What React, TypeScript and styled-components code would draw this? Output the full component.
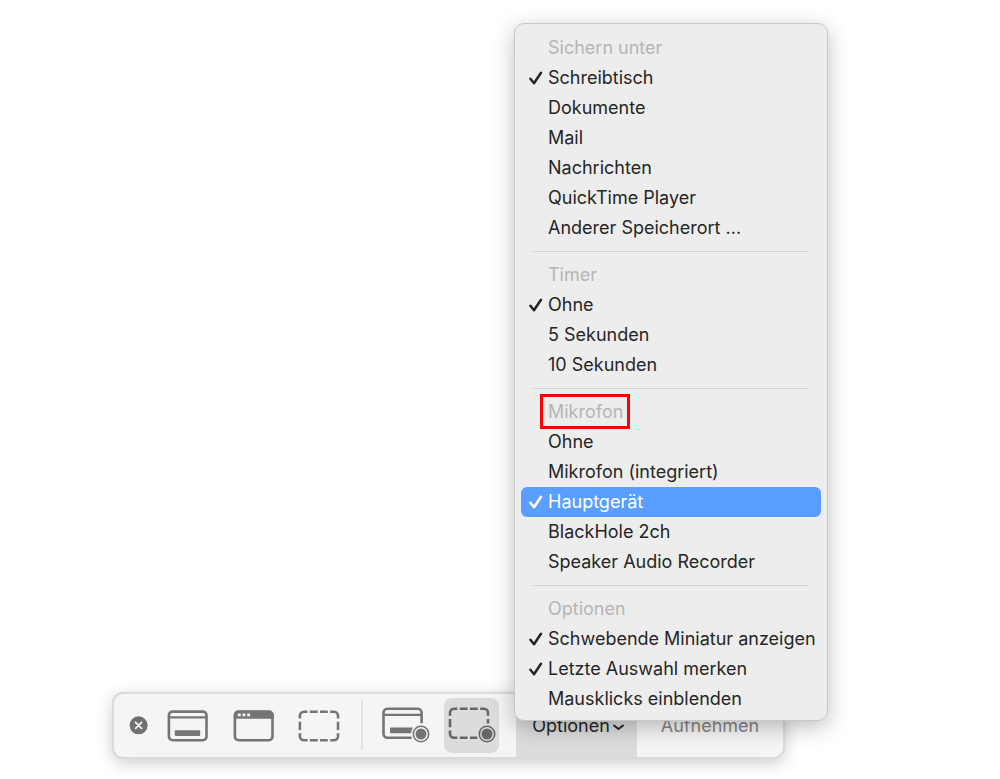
import React from "react";
import styled, { createGlobalStyle } from "styled-components";

const GlobalStyle = createGlobalStyle`
  *, *::before, *::after { box-sizing: border-box; }
  body {
    margin: 0;
    background: #fff;
    color: #262626;
    font-family: Inter, "Liberation Sans", sans-serif;
    font-size: 18px;
  }
  button { font: inherit; color: inherit; border: 0; padding: 0; background: none; }
`;

const Desktop = styled.main`
  min-height: 100vh;
  display: flex;
  align-items: flex-end;
  padding: 20px 215px 20px 112px;
`;

const Toolbar = styled.div`
  flex: 1;
  display: flex;
  align-items: stretch;
  height: 67px;
  border: 2px solid #dadada;
  border-radius: 11px;
  background: #f5f5f5;
  box-shadow: 0 4px 16px rgba(0, 0, 0, 0.2);
`;

const Tools = styled.div`
  flex: none;
  width: 402px;
  display: flex;
  align-items: center;
  padding: 0 0 1px 15px;
`;

const CloseButton = styled.button`
  width: 20px;
  height: 20px;
  margin-right: 11px;
  svg { display: block; }
`;

const ToolButton = styled.button<{ $active?: boolean }>`
  width: 55px;
  height: 55px;
  margin-right: 11px;
  border-radius: 8px;
  background: ${(p) => (p.$active ? "#dcdcdc" : "transparent")};
  color: ${(p) => (p.$active ? "#666" : "#757575")};
  svg { display: block; }
`;

const ToolDivider = styled.span`
  width: 2px;
  height: 50px;
  margin: 0 15px 0 3px;
  background: #e2e2e2;
`;

const OptionsAnchor = styled.div`
  position: relative;
  flex: none;
  width: 121px;
`;

const OptionsButton = styled.button`
  width: 100%;
  height: 100%;
  display: flex;
  align-items: center;
  justify-content: center;
  gap: 2px;
  padding-left: 4px;
  background: #dcdcdc;
`;

const RecordButton = styled.button`
  flex: 1;
  border-radius: 0 9px 9px 0;
  color: #858585;
`;

const Menu = styled.div`
  position: absolute;
  left: -2px;
  bottom: 36px;
  width: 314px;
  padding: 8px 6px 6px;
  border: 1px solid #c8c8c8;
  border-radius: 10px;
  background: #ededed;
  box-shadow: 0 6px 22px rgba(0, 0, 0, 0.26);
`;

const Section = styled.div`
  & + & {
    margin-top: 8px;
  }
  & + &::before {
    content: "";
    display: block;
    height: 1px;
    margin: 0 13px 7px 12px;
    background: #d2d2d2;
  }
`;

const SectionTitle = styled.div`
  padding-left: 27px;
  line-height: 31px;
  color: #b5b5b5;
`;

const TitleText = styled.span<{ $marked?: boolean }>`
  position: relative;
  display: inline-block;
  ${(p) =>
    p.$marked &&
    `&::after {
      content: "";
      position: absolute;
      inset: -2px -7px -2px -8px;
      border: 3px solid #f00;
    }`}
`;

const Item = styled.button<{ $highlighted?: boolean }>`
  width: 100%;
  display: flex;
  align-items: center;
  padding-left: 8px;
  border-radius: 6px;
  line-height: 30px;
  text-align: left;
  white-space: nowrap;
  background: ${(p) => (p.$highlighted ? "#5a9fff" : "transparent")};
  color: ${(p) => (p.$highlighted ? "#fff" : "inherit")};
`;

const CheckSlot = styled.span`
  flex: none;
  width: 19px;
  height: 14px;
  svg { display: block; }
`;

const Check = () => (
  <svg width="14" height="14" viewBox="0 0 14 14" fill="none" stroke="currentColor" strokeWidth="2.5" strokeLinecap="round" strokeLinejoin="round" aria-hidden="true">
    <path d="M1.4 7.8 L5 12.2 L12 1.7" />
  </svg>
);

const RecordBadge = () => (
  <>
    <circle cx="43" cy="36" r="7.7" fill="none" stroke="currentColor" strokeWidth="1.6" />
    <circle cx="43" cy="36" r="5.5" fill="currentColor" />
  </>
);

const frame = { fill: "none", stroke: "currentColor", strokeWidth: 2.6 };

const ScreenIcon = () => (
  <svg width="55" height="55" viewBox="0 0 55 55" aria-hidden="true">
    <rect x="8.9" y="13.6" width="37.6" height="28.6" rx="3.6" {...frame} />
    <path d="M9 19.4H47" {...frame} strokeWidth="2.2" />
    <rect x="14.8" y="32.2" width="25.4" height="5.8" rx="1" fill="currentColor" />
  </svg>
);

const WindowIcon = () => (
  <svg width="55" height="55" viewBox="0 0 55 55" aria-hidden="true">
    <rect x="8.9" y="13.6" width="37.6" height="28.6" rx="3.6" {...frame} />
    <path d="M7.8 20.8V17a4.3 4.3 0 0 1 4.3-4.3H43.4a4.3 4.3 0 0 1 4.3 4.3v3.8Z" fill="currentColor" />
    <path d="M11.8 15.4h2.9v2.9h-2.9zM16.5 15.4h2.9v2.9h-2.9zM21.2 15.4h2.9v2.9h-2.9z" fill="#f5f5f5" />
  </svg>
);

const SelectionIcon = () => (
  <svg width="55" height="55" viewBox="0 0 55 55" aria-hidden="true">
    <path
      d="M7.9 20.5V17.7a4 4 0 0 1 4-4H15.5M17.8 13.7H25.7M28 13.7H35.8M38.2 13.7H42a4 4 0 0 1 4 4V20.5M7.9 23.7V32M46 23.7V32M7.9 35.2V38.2a4 4 0 0 0 4 4H15.5M17.8 42.2H25.7M28 42.2H35.8M38.2 42.2H42a4 4 0 0 0 4-4V35.2"
      {...frame}
    />
  </svg>
);

const RecordScreenIcon = () => (
  <svg width="55" height="55" viewBox="0 0 55 55" aria-hidden="true">
    <path d="M43.6 25.2V14.7a4 4 0 0 0-4-4H9.5a4 4 0 0 0-4 4V35.8a4 4 0 0 0 4 4H33.6" {...frame} />
    <path d="M5 16.8H43.6" {...frame} strokeWidth="2.2" />
    <path d="M13 29.5H35Q33.3 32 33 35.2H13a1 1 0 0 1-1-1V30.5a1 1 0 0 1 1-1Z" fill="currentColor" />
    <RecordBadge />
  </svg>
);

const RecordSelectionIcon = () => (
  <svg width="55" height="55" viewBox="0 0 55 55" aria-hidden="true">
    <path
      d="M6 17.8V14.7a4 4 0 0 1 4-4H13.4M15.8 10.7H23.6M26 10.7H33.8M36.2 10.7H40a4 4 0 0 1 4 4V17.8M6 21V29.3M44 21V25.4M6 32.5V35.8a4 4 0 0 0 4 4H13.4M15.8 39.8H23.6M26 39.8H33.4"
      {...frame}
    />
    <RecordBadge />
  </svg>
);

type Entry = { label: string; checked?: boolean; highlighted?: boolean };
type Group = { title: string; marked?: boolean; multiple?: boolean; entries: Entry[] };

const groups: Group[] = [
  {
    title: "Sichern unter",
    entries: [
      { label: "Schreibtisch", checked: true },
      { label: "Dokumente" },
      { label: "Mail" },
      { label: "Nachrichten" },
      { label: "QuickTime Player" },
      { label: "Anderer Speicherort ..." },
    ],
  },
  {
    title: "Timer",
    entries: [{ label: "Ohne", checked: true }, { label: "5 Sekunden" }, { label: "10 Sekunden" }],
  },
  {
    title: "Mikrofon",
    marked: true,
    entries: [
      { label: "Ohne" },
      { label: "Mikrofon (integriert)" },
      { label: "Hauptgerät", checked: true, highlighted: true },
      { label: "BlackHole 2ch" },
      { label: "Speaker Audio Recorder" },
    ],
  },
  {
    title: "Optionen",
    multiple: true,
    entries: [
      { label: "Schwebende Miniatur anzeigen", checked: true },
      { label: "Letzte Auswahl merken", checked: true },
      { label: "Mausklicks einblenden" },
    ],
  },
];

export default function App() {
  return (
    <>
      <GlobalStyle />
      <Desktop>
        <Toolbar role="toolbar">
          <Tools>
            <CloseButton aria-label="Schließen">
              <svg width="20" height="20" viewBox="0 0 20 20" aria-hidden="true">
                <circle cx="9.6" cy="10.3" r="9" fill="#707070" />
                <path d="M6.6 7.3l6 6M12.6 7.3l-6 6" stroke="#f5f5f5" strokeWidth="1.8" strokeLinecap="round" />
              </svg>
            </CloseButton>
            <ToolButton aria-label="Gesamten Bildschirm aufnehmen"><ScreenIcon /></ToolButton>
            <ToolButton aria-label="Fenster aufnehmen"><WindowIcon /></ToolButton>
            <ToolButton aria-label="Auswahl aufnehmen"><SelectionIcon /></ToolButton>
            <ToolDivider />
            <ToolButton aria-label="Bildschirmvideo aufnehmen"><RecordScreenIcon /></ToolButton>
            <ToolButton $active aria-pressed="true" aria-label="Auswahl als Video aufnehmen"><RecordSelectionIcon /></ToolButton>
          </Tools>
          <OptionsAnchor>
            <OptionsButton aria-haspopup="menu" aria-expanded="true">
              Optionen
              <svg width="13" height="10" viewBox="0 0 13 10" fill="none" stroke="currentColor" strokeWidth="2" strokeLinecap="round" strokeLinejoin="round" aria-hidden="true">
                <path d="M2 4.5L6.5 8L11 4.5" />
              </svg>
            </OptionsButton>
            <Menu role="menu">
              {groups.map((group) => (
                <Section key={group.title} role="group" aria-label={group.title}>
                  <SectionTitle>
                    <TitleText $marked={group.marked}>{group.title}</TitleText>
                  </SectionTitle>
                  {group.entries.map((entry) => (
                    <Item
                      key={entry.label}
                      role={group.multiple ? "menuitemcheckbox" : "menuitemradio"}
                      aria-checked={!!entry.checked}
                      $highlighted={entry.highlighted}
                    >
                      <CheckSlot>{entry.checked && <Check />}</CheckSlot>
                      {entry.label}
                    </Item>
                  ))}
                </Section>
              ))}
            </Menu>
          </OptionsAnchor>
          <RecordButton>Aufnehmen</RecordButton>
        </Toolbar>
      </Desktop>
    </>
  );
}
